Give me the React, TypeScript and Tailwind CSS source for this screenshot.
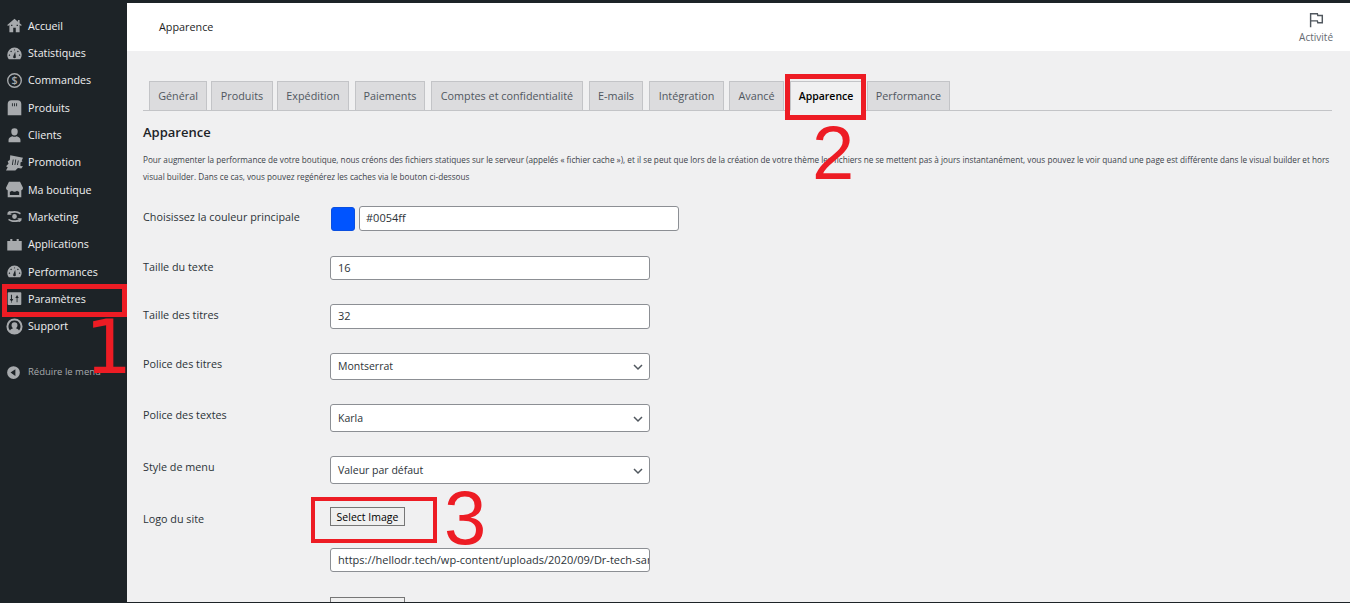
import type { ReactNode } from "react";

const font = "[font-family:'Open_Sans','Noto_Sans',sans-serif]";

const Home = () => (
  <path
    fillRule="evenodd"
    d="M10 2 1.500 9.500l.8 1L4 9.300V18h12V9.300l1.700 1.200.8-1-2.500-2.200V3.500h-2v2.100zM8.500 12.500h3V18h-3zM6 9h1.500v1.500H6zm6.500 0H14v1.500h-1.500z"
  />
);
const Gauge = () => (
  <path
    fillRule="evenodd"
    d="M10 3a8.500 8.500 0 0 0-8.500 8.500c0 2 .7 3.800 1.800 5.200h13.400a8.500 8.500 0 0 0 1.800-5.200A8.500 8.500 0 0 0 10 3zM6 6.500l1 1-1 1-1-1zm4-1.500 .8 .8-.8 .8-.8-.8zm4 1.500 1 1-1 1-1-1zM4 11l1 1-1 1-1-1zm12 0 1 1-1 1-1-1zm-5.200-3 .7 5.500a1.600 1.600 0 1 1-3 0z"
  />
);
const Dollar = () => (
  <>
    <circle cx="10" cy="10" r="8" fill="none" stroke="currentColor" strokeWidth="1.600" />
    <text x="10" y="14.500" textAnchor="middle" fontSize="12.500" fontWeight="600" fontFamily="Open Sans, sans-serif">$</text>
  </>
);
const Archive = () => (
  <path
    fillRule="evenodd"
    d="M6.500 1.500h7c3 0 4.500 1.800 4.500 4.500v13H2V6c0-2.700 1.500-4.500 4.500-4.500zm.5 3.500v3.500h1V5zm2.500 0v3.500h1V5zm2.500 0v3.500h1V5z"
  />
);
const User = () => (
  <path d="M10 1.500a3.800 3.800 0 0 1 3.800 4c0 2.300-1.300 4.500-3.800 4.500S6.200 7.800 6.200 5.500a3.800 3.800 0 0 1 3.800-4zM3 18v-3c0-2 2.500-3.800 4.500-4.200 1.500 1 3.500 1 5 0 2 .4 4.500 2.200 4.500 4.200v3z" />
);
const Promo = () => (
  <path
    fillRule="evenodd"
    d="M5 1.500 20 4.500l-1.500 3 1 1-2.500 1.500v4l3 .5-2 2.500-4-.5-3 3H0l2-4-2-1 3-3-1-3 2.500-1.500zM8 6.500l-1 6.500h1l1-6.500zm3 0-1 6.500h1l1-6.500zm3 1-1 5.500h1l1-5.500z"
  />
);
const Store = () => (
  <path
    fillRule="evenodd"
    d="M3.500 1h13l3.500 7c0 1.600-1 2.800-2 3v8H2v-8c-1-.2-2-1.400-2-3zM4.500 12.500V16.500h11v-4c-.9 0-1.700-.3-2.500-1-.8.7-1.800 1-3 1s-2.200-.3-3-1c-.8.7-1.600 1-2.500 1z"
  />
);
const Marketing = () => (
  <path
    fillRule="evenodd"
    d="M10 7.200a2.800 2.800 0 1 1 0 5.600 2.800 2.800 0 0 1 0-5.600zM2 5l2-1.500C5.800 4.200 7.800 3.500 10 3.500c3 0 5.500 1 7.500 2.500l-1 1.500C14.800 6.200 12.500 5.500 10 5.500c-2 0-3.500.4-5 1.200L7 8H1.500zM18 15l-2 1.500c-1.800-.7-3.800 0-6 0-3 0-5.500-1-7.500-2.500l1-1.500c1.700 1.300 4 2 6.500 2 2 0 3.500-.4 5-1.200L13 12h5.500z"
  />
);
const Apps = () => <path d="M1.500 6H5V3.500h2.500V6h5V3.500H15V6h3.500v11h-17z" />;
const Sliders = () => (
  <path
    fillRule="evenodd"
    d="M3 2.500h14a1 1 0 0 1 1 1v13a1 1 0 0 1-1 1H3a1 1 0 0 1-1-1v-13a1 1 0 0 1 1-1zm2.800 3v5H4.500L6.500 14l2-3.500H7v-5zM6 15v-.5h1V15zM13.500 14.500v-5H15L13 6l-2 3.500h1.500v5z"
  />
);
const Support = () => (
  <path
    fillRule="evenodd"
    d="M10 .5a9.500 9.500 0 1 1 0 19 9.500 9.500 0 0 1 0-19zm0 2.500a7 7 0 0 0-5.300 11.600c.9-1.300 2.500-2 3.800-2.400-1.200-.7-2-2-2-3.600a3.500 3.500 0 0 1 7 0c0 1.600-.8 2.900-2 3.600 1.300.4 2.900 1.100 3.800 2.400A7 7 0 0 0 10 3z"
  />
);
const Collapse = () => (
  <path fillRule="evenodd" d="M10 1.500a8.500 8.500 0 1 1 0 17 8.500 8.500 0 0 1 0-17zm2.500 4L6 10l6.500 4.500z" />
);

const menu: [string, ReactNode][] = [
  ["Accueil", <Home />],
  ["Statistiques", <Gauge />],
  ["Commandes", <Dollar />],
  ["Produits", <Archive />],
  ["Clients", <User />],
  ["Promotion", <Promo />],
  ["Ma boutique", <Store />],
  ["Marketing", <Marketing />],
  ["Applications", <Apps />],
  ["Performances", <Gauge />],
  ["Paramètres", <Sliders />],
  ["Support", <Support />],
];

const tabs: [string, string][] = [
  ["Général", "w-[58px] mr-[4px]"],
  ["Produits", "w-[62px] mr-[4px]"],
  ["Expédition", "w-[72px] mr-[6px]"],
  ["Paiements", "w-[70px] mr-[6px]"],
  ["Comptes et confidentialité", "w-[152px] mr-[6px]"],
  ["E-mails", "w-[54px] mr-[6px]"],
  ["Intégration", "w-[75px] mr-[5px]"],
  ["Avancé", "w-[55px] mr-[6px]"],
  ["Apparence", "w-[72px] mr-[5px]"],
  ["Performance", "w-[83px]"],
];

function MenuIcon({ children, className }: { children: ReactNode; className?: string }) {
  return (
    <svg viewBox="0 0 20 20" fill="currentColor" className={`shrink-0 ${className ?? "size-[17px]"}`}>
      {children}
    </svg>
  );
}

function Label({ children, className }: { children: ReactNode; className?: string }) {
  return (
    <div className={`w-[187px] shrink-0 text-[10.800px] leading-[16px] text-[#2c3338] ${className ?? ""}`}>
      {children}
    </div>
  );
}

function TextField({ value, className }: { value: string; className?: string }) {
  return (
    <div
      className={`flex items-center overflow-hidden whitespace-nowrap rounded-[3px] border border-[#8c8f94] bg-white text-[11px] text-[#2c3338] ${className ?? "pl-[7px]"}`}
    >
      {value}
    </div>
  );
}

function SelectField({ value, className }: { value: string; className?: string }) {
  return (
    <div
      className={`flex w-[320px] items-center justify-between rounded-[3px] border border-[#8c8f94] bg-white pl-[7px] pr-[5px] pt-[1px] text-[10.500px] text-[#2c3338] ${className ?? ""}`}
    >
      {value}
      <svg viewBox="0 0 12 12" className="size-[12px]" fill="none" stroke="#50575e" strokeWidth="1.500">
        <path d="M2 4l4 4 4-4" />
      </svg>
    </div>
  );
}

export default function App() {
  return (
    <div className={`relative flex h-[603px] w-[1350px] overflow-hidden bg-[#f0f0f1] ${font}`}>
      <aside className="flex w-[127px] shrink-0 flex-col bg-[#1d2327] pt-[12.250px]">
        {menu.map(([name, icon]) => (
          <div key={name} className="flex h-[27.300px] items-center gap-[5px] pl-[6px] text-[10.700px] text-[#f0f0f1]">
            <MenuIcon className="size-[17px] text-[#a7aaad]">{icon}</MenuIcon>
            {name}
          </div>
        ))}
        <div className="mt-[19px] flex h-[27px] items-center gap-[7px] pl-[6px] text-[9.500px] text-[#a7aaad]">
          <MenuIcon className="size-[15px] text-[#a7aaad]">
            <Collapse />
          </MenuIcon>
          Réduire le menu
        </div>
      </aside>

      <div className="flex min-w-0 flex-1 flex-col">
        <div className="h-[3px] shrink-0 bg-[#1d2327]" />
        <header className="flex h-[48px] shrink-0 items-center justify-between bg-white pl-[32px] pr-[17px]">
          <span className="text-[10.800px] text-[#1e1e1e]">Apparence</span>
          <div className="-mt-[1px] flex flex-col items-center">
            <svg viewBox="0 0 20 20" className="size-[18px]" fill="none" stroke="#50575e" strokeWidth="1.600">
              <path d="M4 18V3h7.500l.5 2h5v8h-5l-.5-2H4" />
            </svg>
            <span className="mt-[2px] text-[10px] leading-[12px] text-[#646970]">Activité</span>
          </div>
        </header>

        <main className="flex flex-1 flex-col pl-[16px] pr-[18px] pt-[30px]">
          <nav className="flex h-[30px] shrink-0 border-b border-[#c3c4c7] pl-[6px]">
            {tabs.map(([name, width]) => {
              const active = name === "Apparence";
              return (
                <div
                  key={name}
                  className={`flex h-[30px] shrink-0 items-center justify-center border border-[#c3c4c7] pt-[1px] font-medium ${width} ${
                    active
                      ? "border-b-[#f0f0f1] bg-[#f0f0f1] text-[10.500px] font-semibold text-[#000]"
                      : "bg-[#dcdcde] text-[10.800px] text-[#50575e]"
                  }`}
                >
                  {name}
                </div>
              );
            })}
          </nav>

          <h2 className="mt-[12px] text-[13px] font-semibold leading-[18px] text-[#1d2327]">Apparence</h2>
          <p className="mt-[10px] w-[1190px] text-[8.200px] leading-[17px] text-[#3c434a]">
            Pour augmenter la performance de votre boutique, nous créons des fichiers statiques sur le serveur (appelés « fichier cache »), et il se peut que lors de la création de votre thème les fichiers ne se mettent pas à jours instantanément, vous pouvez le voir quand une page est différente dans le visual builder et hors visual builder. Dans ce cas, vous pouvez regénérez les caches via le bouton ci-dessous
          </p>

          <div className="mt-[21px] flex h-[24px] items-start">
            <Label className="mt-[3px]">Choisissez la couleur principale</Label>
            <div className="ml-[1px] mt-[1px] h-[24px] w-[24px] rounded-[3px] border border-[#0a4fe0] bg-[#0054ff]" />
            <TextField value="#0054ff" className="ml-[4px] h-[25px] w-[320px] pl-[6px]" />
          </div>
          <div className="mt-[26px] flex items-start">
            <Label className="mt-[3px]">Taille du texte</Label>
            <TextField value="16" className="h-[24px] w-[320px] pl-[7px]" />
          </div>
          <div className="mt-[24px] flex items-start">
            <Label className="mt-[3px]">Taille des titres</Label>
            <TextField value="32" className="h-[25px] w-[320px] pl-[7px]" />
          </div>
          <div className="mt-[24px] flex items-start">
            <Label className="mt-[3px]">Police des titres</Label>
            <SelectField value="Montserrat" className="h-[27px]" />
          </div>
          <div className="mt-[24px] flex items-start">
            <Label className="mt-[3px]">Police des textes</Label>
            <SelectField value="Karla" className="h-[28px]" />
          </div>
          <div className="mt-[24px] flex items-start">
            <Label className="mt-[3px]">Style de menu</Label>
            <SelectField value="Valeur par défaut" className="h-[28px]" />
          </div>
          <div className="mt-[23px] flex items-start">
            <Label className="mt-[4px]">Logo du site</Label>
            <div className="flex h-[19px] w-[75px] items-center justify-center border border-[#767676] bg-[#efefef] pt-[2px] text-[10.500px] text-black">
              Select Image
            </div>
          </div>
          <TextField
            value="https://hellodr.tech/wp-content/uploads/2020/09/Dr-tech-sans-fond.png"
            className="ml-[187px] mt-[21px] h-[24px] w-[320px] shrink-0 pl-[7px]"
          />
          <div className="ml-[187px] mt-[25px] h-[19px] w-[75px] shrink-0 border border-[#767676] bg-[#efefef]" />
        </main>
        <div className="absolute bottom-0 left-0 h-[1px] w-full bg-[#1d2327]" />
      </div>

      {/* annotations drawn over the capture */}
      <div className="absolute left-[2px] top-[284px] h-[33px] w-[125px] border-[5px] border-[#ed1c24]" />
      <span className="absolute left-[85px] top-[302px] text-[74px] leading-[90px] text-[#ed1c24] [font-family:'DejaVu_Sans',sans-serif]">
        1
      </span>
      <div className="absolute left-[785px] top-[74px] h-[46px] w-[81px] border-[5px] border-[#ed1c24]" />
      <span className="absolute left-[812px] top-[108px] text-[76px] leading-[90px] text-[#ed1c24] [font-family:'Liberation_Sans',sans-serif]">
        2
      </span>
      <div className="absolute left-[311px] top-[497px] h-[46px] w-[126px] border-[4px] border-[#ed1c24]" />
      <span className="absolute left-[444px] top-[473px] text-[76px] leading-[90px] text-[#ed1c24] [font-family:'Liberation_Sans',sans-serif]">
        3
      </span>
    </div>
  );
}
